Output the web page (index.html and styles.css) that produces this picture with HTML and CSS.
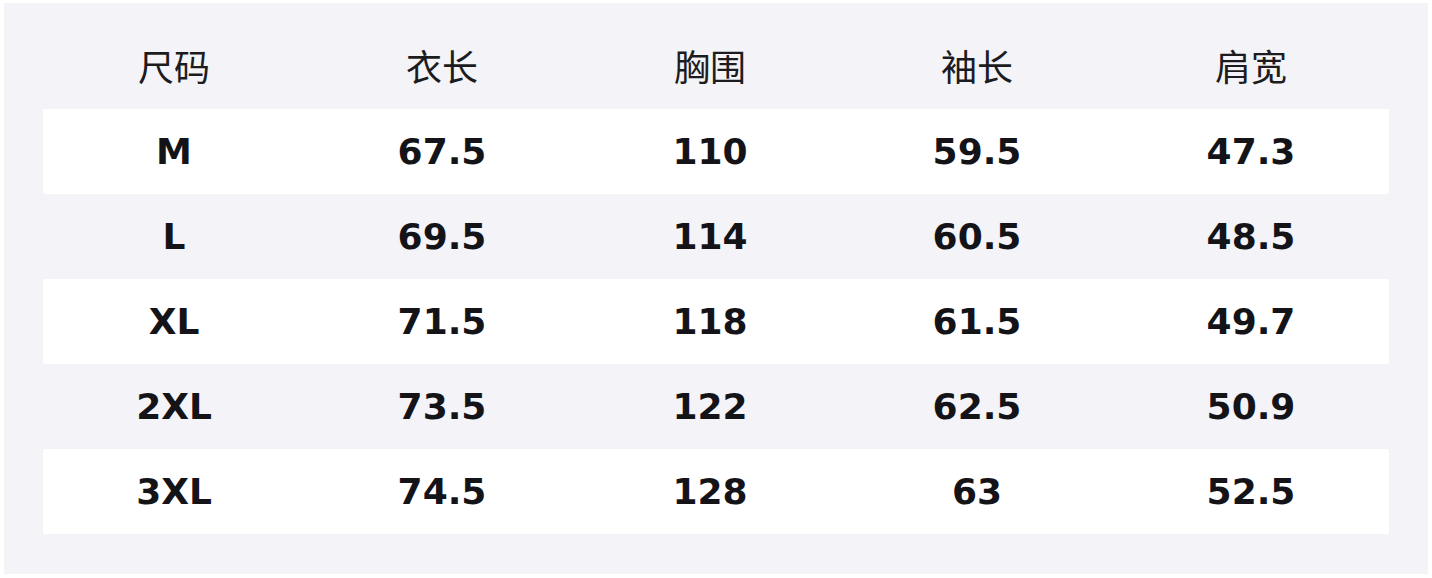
FILE: index.html
```html
<!DOCTYPE html>
<html lang="zh">
<head>
<meta charset="utf-8">
<title>尺码表</title>
<link rel="stylesheet" href="styles.css">
</head>
<body>
<div class="panel">
  <div class="row head">
    <div class="cell">尺码</div>
    <div class="cell">衣长</div>
    <div class="cell">胸围</div>
    <div class="cell">袖长</div>
    <div class="cell">肩宽</div>
  </div>
  <div class="row odd">
    <div class="cell">M</div><div class="cell">67.5</div><div class="cell">110</div><div class="cell">59.5</div><div class="cell">47.3</div>
  </div>
  <div class="row">
    <div class="cell">L</div><div class="cell">69.5</div><div class="cell">114</div><div class="cell">60.5</div><div class="cell">48.5</div>
  </div>
  <div class="row odd">
    <div class="cell">XL</div><div class="cell">71.5</div><div class="cell">118</div><div class="cell">61.5</div><div class="cell">49.7</div>
  </div>
  <div class="row">
    <div class="cell">2XL</div><div class="cell">73.5</div><div class="cell">122</div><div class="cell">62.5</div><div class="cell">50.9</div>
  </div>
  <div class="row odd">
    <div class="cell">3XL</div><div class="cell">74.5</div><div class="cell">128</div><div class="cell">63</div><div class="cell">52.5</div>
  </div>
</div>
</body>
</html>
```
FILE: styles.css
```css
html, body {
  margin: 0;
  padding: 0;
  background: #ffffff;
}
body {
  width: 1432px;
  height: 578px;
  overflow: hidden;
}
.panel {
  margin: 3px 4px 0 4px;
  height: 571px;
  box-sizing: border-box;
  padding: 21px 39px 40px 39px;
  background: #f3f3f8;
  display: flex;
  flex-direction: column;
}
.row {
  display: grid;
  grid-template-columns: 262px 274px 262px 272px 276px;
  height: 85px;
  box-sizing: border-box;
  align-items: center;
  font-family: "DejaVu Sans", sans-serif;
  font-weight: bold;
  font-size: 36px;
  color: #141418;
}
.row.odd {
  background: #ffffff;
  border-radius: 2px;
}
.row.head {
  padding-bottom: 4px;
  font-family: "Noto Sans CJK SC", "Noto Sans", sans-serif;
  font-weight: normal;
  font-size: 36px;
  color: #1c1c20;
}
.cell {
  text-align: center;
  line-height: 1;
}
```
